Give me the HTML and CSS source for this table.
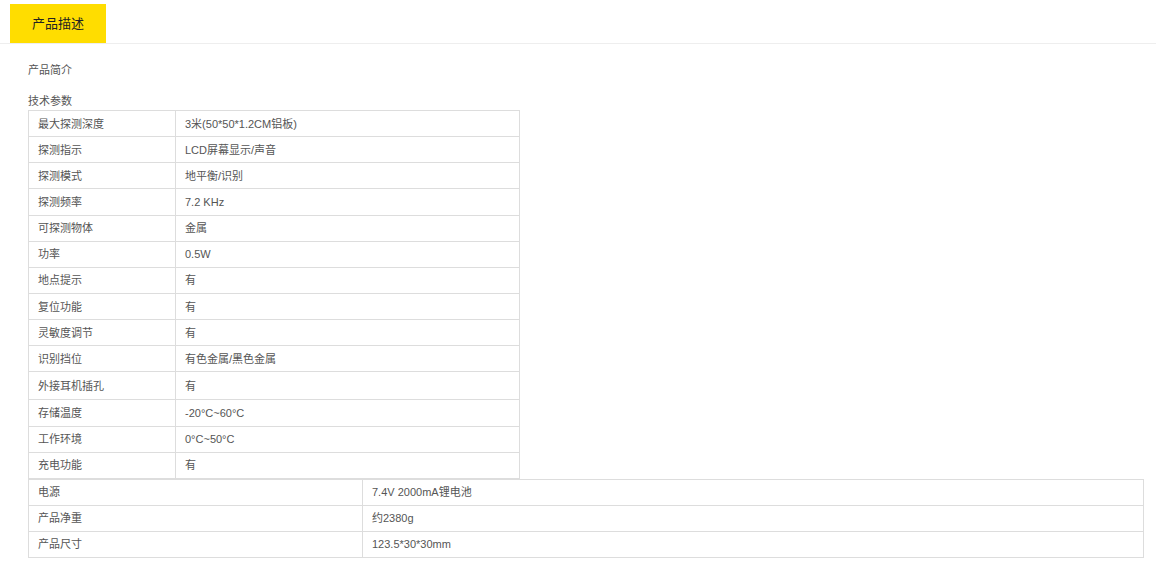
FILE: index.html
```html
<!DOCTYPE html>
<html lang="zh">
<head>
<meta charset="utf-8">
<link rel="stylesheet" href="styles.css">
</head>
<body>
<div class="tabbar">
  <div class="tab">产品描述</div>
</div>
<div class="content">
  <div class="intro">产品简介</div>
  <div class="section-title">技术参数</div>
  <table class="spec spec-a">
    <colgroup><col class="c1"><col class="c2"></colgroup>
    <tr><td>最大探测深度</td><td>3米(50*50*1.2CM铝板)</td></tr>
    <tr><td>探测指示</td><td>LCD屏幕显示/声音</td></tr>
    <tr><td>探测模式</td><td>地平衡/识别</td></tr>
    <tr><td>探测频率</td><td>7.2 KHz</td></tr>
    <tr><td>可探测物体</td><td>金属</td></tr>
    <tr><td>功率</td><td>0.5W</td></tr>
    <tr><td>地点提示</td><td>有</td></tr>
    <tr><td>复位功能</td><td>有</td></tr>
    <tr><td>灵敏度调节</td><td>有</td></tr>
    <tr><td>识别挡位</td><td>有色金属/黑色金属</td></tr>
    <tr class="tall"><td>外接耳机插孔</td><td>有</td></tr>
    <tr><td>存储温度</td><td>-20°C~60°C</td></tr>
    <tr><td>工作环境</td><td>0°C~50°C</td></tr>
    <tr><td>充电功能</td><td>有</td></tr>
  </table>
  <table class="spec spec-b">
    <colgroup><col class="d1"><col class="d2"></colgroup>
    <tr><td>电源</td><td>7.4V 2000mA锂电池</td></tr>
    <tr><td>产品净重</td><td>约2380g</td></tr>
    <tr><td>产品尺寸</td><td>123.5*30*30mm</td></tr>
  </table>
</div>
</body>
</html>
```
FILE: styles.css
```css
html, body {
  margin: 0;
  padding: 0;
  background: #fff;
}
body {
  font-family: "Liberation Sans", "Noto Sans CJK SC", sans-serif;
  font-size: 11px;
  color: #555;
}
.tabbar {
  padding: 4px 0 0 10px;
  border-bottom: 1px solid #eeeeee;
  display: flex;
}
.tab {
  width: 96px;
  height: 39px;
  line-height: 39px;
  text-align: center;
  background: #ffdd00;
  color: #222;
  font-size: 13px;
}
.content {
  padding: 0 13px 0 28px;
}
.intro {
  margin-top: 19px;
  line-height: 14px;
  height: 14px;
}
.section-title {
  margin-top: 17px;
  line-height: 14px;
  height: 14px;
  margin-bottom: 2px;
}
.spec {
  border-collapse: collapse;
  table-layout: fixed;
}
.spec td {
  border: 1px solid #dddddd;
  padding: 0 9px;
  height: 25.15px;
  line-height: 14px;
  vertical-align: middle;
  white-space: nowrap;
}
.spec tr.tall td {
  height: 27px;
}
.spec-a {
  width: 491px;
}
.spec-a .c1 { width: 147px; }
.spec-a .c2 { width: 344px; }
.spec-b {
  width: 1115px;
  margin-top: 0;
}
.spec-b td {
  height: 25px;
}
.spec-b .d1 { width: 334px; }
.spec-b .d2 { width: 781px; }
```
